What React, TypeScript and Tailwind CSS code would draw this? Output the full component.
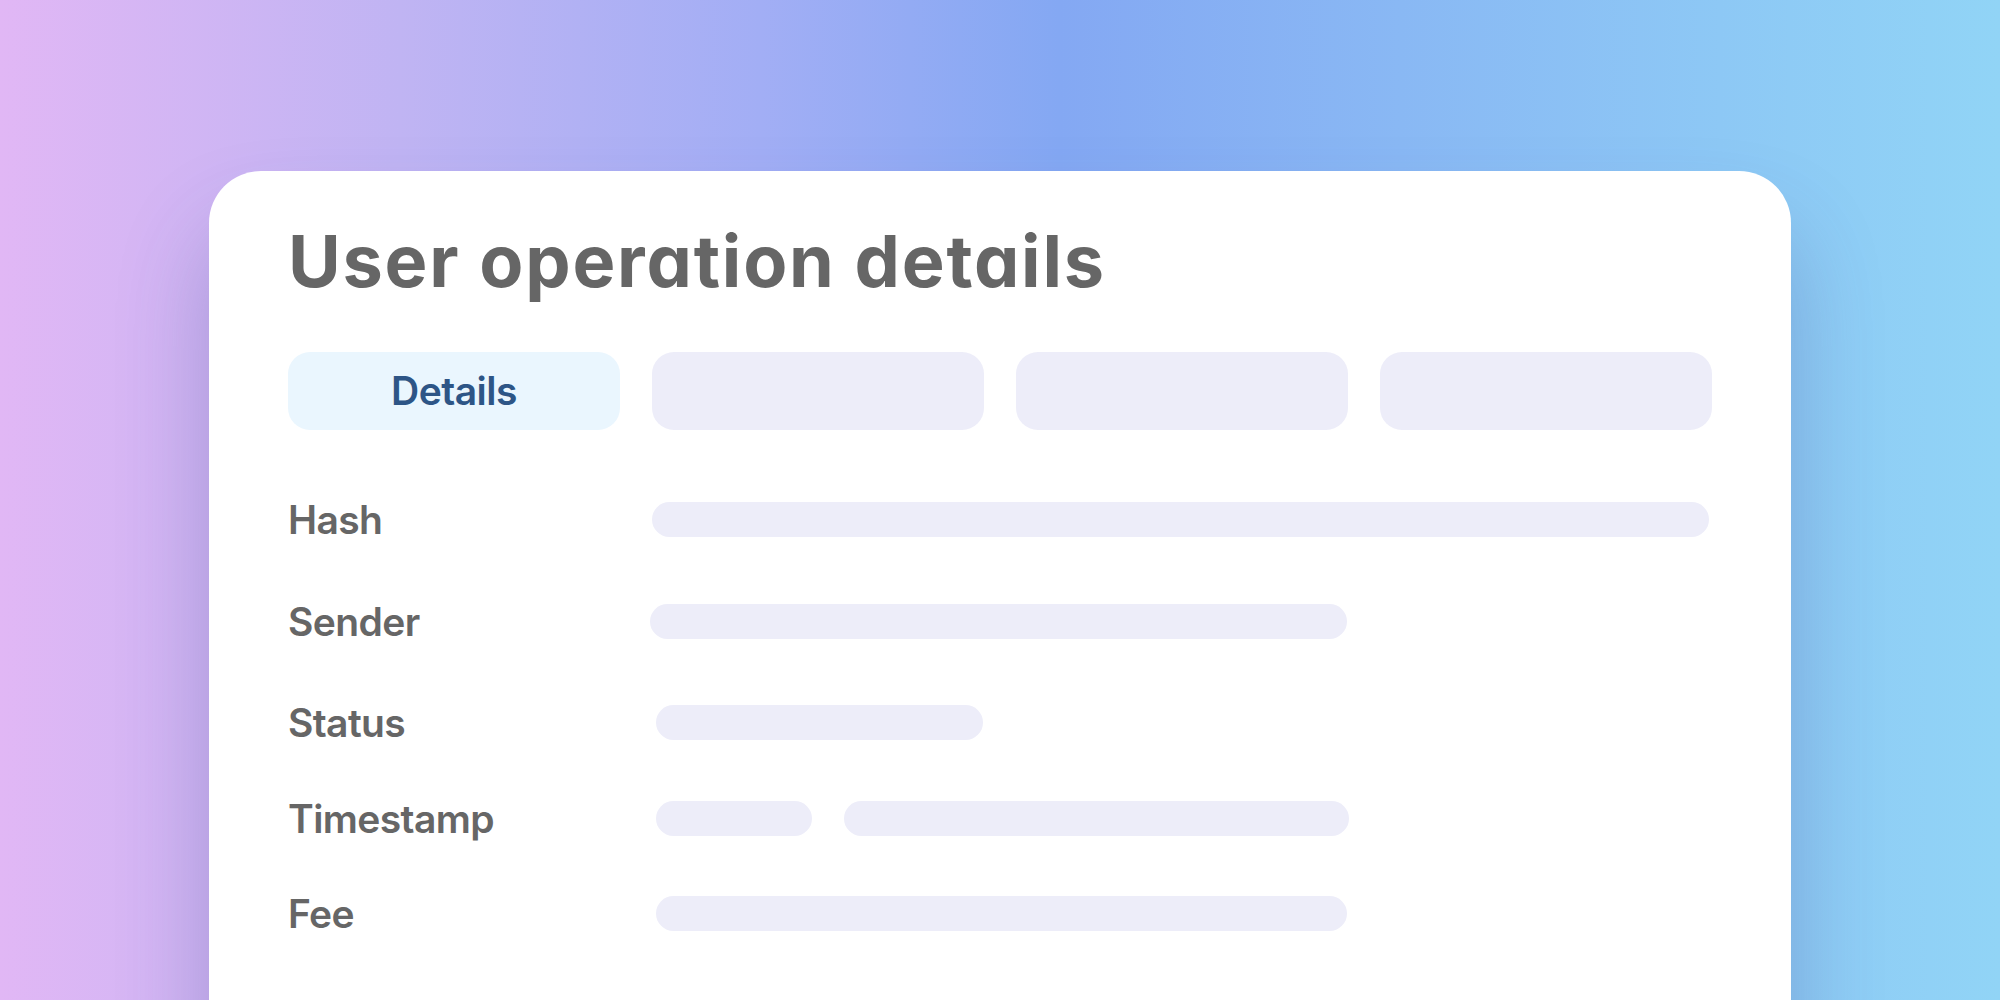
import React from "react";

const rows: { label: string; bars: { w: number; ml: number }[]; mt: number }[] = [
  { label: "Hash", bars: [{ w: 1057, ml: 0 }], mt: 72 },
  { label: "Sender", bars: [{ w: 697, ml: -2 }], mt: 67 },
  { label: "Status", bars: [{ w: 327, ml: 4 }], mt: 66 },
  { label: "Timestamp", bars: [{ w: 156, ml: 4 }, { w: 505, ml: 32 }], mt: 61 },
  { label: "Fee", bars: [{ w: 691, ml: 4 }], mt: 60 },
];

export default function App() {
  return (
    <div className="w-[2000px] h-[1000px] overflow-hidden bg-[linear-gradient(90deg,#E1B7F5_0%,#C0B4F3_20%,#A2AEF5_38%,#84A8F3_53%,#89B8F4_70%,#8DC8F5_86%,#91D4F6_100%)] pt-[171px] pl-[209px]">
      <div
        className="w-[1582px] h-[900px] bg-white rounded-t-[52px] px-[79px] pt-[54px] shadow-[0_60px_90px_rgba(60,70,140,0.28)]"
        style={{ fontFamily: "Inter, 'Noto Sans', sans-serif" }}
      >
        <h1 className="text-[72px] leading-none font-bold text-[#666666] tracking-[1.8px] [font-feature-settings:'cv11']">
          User operation details
        </h1>
        <div className="flex gap-[32px] mt-[55px]">
          <div className="w-[332px] h-[78px] rounded-[22px] bg-[#EAF6FE] flex items-center justify-center text-[39px] font-semibold text-[#2D5586] tracking-[-0.5px]">
            Details
          </div>
          <div className="w-[332px] h-[78px] rounded-[22px] bg-[#EDEDF9]" />
          <div className="w-[332px] h-[78px] rounded-[22px] bg-[#EDEDF9]" />
          <div className="w-[332px] h-[78px] rounded-[22px] bg-[#EDEDF9]" />
        </div>
        <div className="flex flex-col">
          {rows.map((r) => (
            <div
              key={r.label}
              className="flex items-center h-[35px]"
              style={{ marginTop: r.mt }}
            >
              <div className="w-[364px] shrink-0 text-[39px] leading-none font-semibold text-[#666666] tracking-[-0.6px]">
                {r.label}
              </div>
              {r.bars.map((b, i) => (
                <div
                  key={i}
                  className="h-[35px] rounded-full bg-[#EDEDF9] shrink-0"
                  style={{ width: b.w, marginLeft: b.ml }}
                />
              ))}
            </div>
          ))}
        </div>
      </div>
    </div>
  );
}
